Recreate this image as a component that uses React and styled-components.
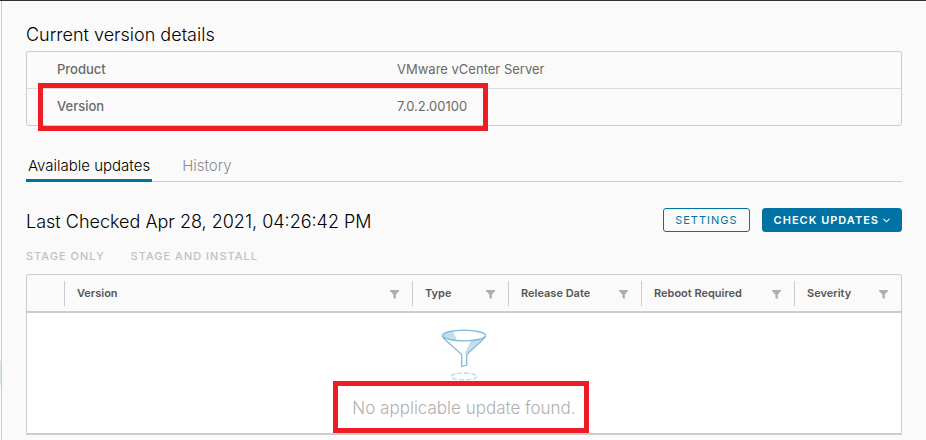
import React from 'react';
import styled, { createGlobalStyle } from 'styled-components';

const GlobalStyle = createGlobalStyle`
  * {
    box-sizing: border-box;
  }

  body {
    margin: 0;
    background-color: #fafafa;
    color: #000;
    font-family: Inter, 'Open Sans', sans-serif;
    font-size: 13px;
  }

  button {
    font-family: inherit;
    cursor: pointer;
  }
`;

const Page = styled.div`
  display: flex;
  min-height: 100vh;
  border-top: 1px solid #313131;
`;

const SideEdge = styled.div`
  width: 2px;
  padding-top: 360px;
  border-right: 1px solid #ccc;

  .selected {
    height: 24px;
    background-color: #d9e4ea;
  }
`;

const Content = styled.main`
  flex: 1;
  padding: 24px 24px 4px;
`;

const Title = styled.h2`
  margin: 0;
  font-size: 18px;
  font-weight: 300;
  line-height: 20px;
`;

const DetailsTable = styled.table`
  width: 100%;
  margin-top: 6px;
  border: 1px solid #ccc;
  border-radius: 3px;
  border-spacing: 0;
  color: #6a6a6a;

  tr {
    position: relative;
  }

  th,
  td {
    height: 36px;
    padding: 0 30px 2px;
    font-weight: 400;
    line-height: 16px;
    text-align: left;
  }

  th {
    width: 340px;
    font-weight: 500;
  }

  tr + tr th,
  tr + tr td {
    height: 37px;
    border-top: 1px solid #ddd;
  }
`;

const Highlight = styled.span`
  position: absolute;
  top: ${(props) => props.$top}px;
  left: ${(props) => props.$left}px;
  width: ${(props) => props.$width}px;
  height: ${(props) => props.$height}px;
  border: 5px solid #ee1c25;
  pointer-events: none;
`;

const Tabs = styled.div`
  display: flex;
  gap: 28px;
  height: 36px;
  margin-top: 20px;
  box-shadow: inset 0 -1px 0 #ccc;
`;

const Tab = styled.button`
  padding: 6px 2px 0;
  border: none;
  border-bottom: 3px solid ${(props) => (props.$active ? '#0072a3' : 'transparent')};
  background: none;
  color: ${(props) => (props.$active ? '#000' : '#8c8c8c')};
  font-size: 15px;
  font-weight: 300;
`;

const Toolbar = styled.div`
  display: flex;
  align-items: flex-end;
  justify-content: space-between;
  margin-top: 26px;

  .buttons {
    display: flex;
    gap: 12px;
  }
`;

const Button = styled.button`
  display: flex;
  align-items: center;
  gap: 4px;
  height: 24px;
  padding: 0 11px;
  border: 1px solid #0072a3;
  border-radius: 3px;
  background-color: ${(props) => (props.$primary ? '#0072a3' : 'transparent')};
  color: ${(props) => (props.$primary ? '#fff' : '#0072a3')};
  font-size: 11px;
  font-weight: ${(props) => (props.$primary ? 600 : 400)};
  letter-spacing: 1px;
`;

const Actions = styled.div`
  display: flex;
  gap: 26px;
  margin-top: 16px;

  button {
    padding: 0;
    border: none;
    background: none;
    color: #c1c1c1;
    font-size: 11px;
    font-weight: 500;
    line-height: 16px;
    letter-spacing: 1px;
  }
`;

const Grid = styled.table`
  width: 100%;
  margin-top: 10px;
  border: 1px solid #ccc;
  border-bottom-width: 2px;
  border-radius: 3px 3px 0 0;
  border-spacing: 0;
  table-layout: fixed;
  color: #565656;

  th,
  td {
    padding: 0;
  }

  th {
    height: 38px;
    border-bottom: 2px solid #ccc;
  }

  td {
    height: 120px;
    background-color: #fff;
  }
`;

const Column = styled.th`
  width: ${(props) => (props.$width ? `${props.$width}px` : 'auto')};

  div {
    display: flex;
    align-items: center;
    justify-content: space-between;
    height: 25px;
    padding: 0 13px 0 12px;
    border-left: 1px solid #ccc;
    font-size: 11px;
    font-weight: 600;
  }

  svg {
    margin-top: 3px;
  }
`;

const Empty = styled.div`
  display: flex;
  flex-direction: column;
  align-items: center;
  gap: 16px;

  p {
    position: relative;
    margin: 0;
    color: #b0b0b0;
    font-size: 17px;
    font-weight: 300;
    line-height: 20px;
  }
`;

const FilterIcon = () => (
  <svg width="9" height="9" viewBox="0 0 9 9" fill="#aeaeae">
    <path d="M0 0h9v1L5.8 4.4V9L3.4 7.8V4.4L0 1z" />
  </svg>
);

const ChevronIcon = () => (
  <svg width="7" height="5" viewBox="0 0 7 5" fill="none" stroke="currentColor" strokeWidth="1.1">
    <path d="M.5 .8l3 3 3-3" />
  </svg>
);

const FunnelIcon = () => (
  <svg width="46" height="54" viewBox="0 -1 46 54" fill="none" stroke="#7fbbdc" strokeWidth="1.3">
    <path d="M1.500 6.500C1.500 4 7 2 12 1.600L16 11.500C8 10.500 2 9 1.500 6.500z" fill="#c3dfee" stroke="none" />
    <path d="M30 11.500C36 11 41 10 43 8.500L26 25L24 24z" fill="#c3dfee" stroke="none" />
    <ellipse cx="23" cy="6.500" rx="21.500" ry="5.300" />
    <path d="M1.500 7c.3 1.800 1.500 2.700 3 4l16.200 14.500v12l5-1.500V25.500L41.500 11c1.600-1.300 2.700-2.200 3-4" />
    <ellipse cx="23" cy="47.500" rx="13" ry="3.500" stroke="#b9d9ea" strokeDasharray="5 2" />
  </svg>
);

const columns = [
  { name: 'Version' },
  { name: 'Type', width: 96 },
  { name: 'Release Date', width: 133 },
  { name: 'Reboot Required', width: 153 },
  { name: 'Severity', width: 107 },
];

const VersionDetails = () => {
  return (
    <section>
      <Title>Current version details</Title>
      <DetailsTable>
        <tbody>
          <tr>
            <th scope="row">Product</th>
            <td>VMware vCenter Server</td>
          </tr>
          <tr>
            <th scope="row">
              Version
              <Highlight $top={-5} $left={11} $width={450} $height={48} />
            </th>
            <td>7.0.2.00100</td>
          </tr>
        </tbody>
      </DetailsTable>
    </section>
  );
};

const UpdatesGrid = () => {
  return (
    <Grid>
      <thead>
        <tr>
          <Column $width={37} />
          {columns.map((column) => (
            <Column key={column.name} $width={column.width} scope="col">
              <div>
                {column.name}
                <FilterIcon />
              </div>
            </Column>
          ))}
        </tr>
      </thead>
      <tbody>
        <tr>
          <td colSpan={6}>
            <Empty>
              <FunnelIcon />
              <p>
                No applicable update found.
                <Highlight $top={-17} $left={-19} $width={256} $height={52} />
              </p>
            </Empty>
          </td>
        </tr>
      </tbody>
    </Grid>
  );
};

const App = () => {
  return (
    <>
      <GlobalStyle />
      <Page>
        <SideEdge>
          <div className="selected" />
        </SideEdge>
        <Content>
          <VersionDetails />

          <Tabs role="tablist">
            <Tab role="tab" aria-selected="true" $active>
              Available updates
            </Tab>
            <Tab role="tab" aria-selected="false">
              History
            </Tab>
          </Tabs>

          <Toolbar>
            <Title>Last Checked Apr 28, 2021, 04:26:42 PM</Title>
            <div className="buttons">
              <Button>SETTINGS</Button>
              <Button $primary>
                CHECK UPDATES
                <ChevronIcon />
              </Button>
            </div>
          </Toolbar>

          <Actions>
            <button disabled>STAGE ONLY</button>
            <button disabled>STAGE AND INSTALL</button>
          </Actions>

          <UpdatesGrid />
        </Content>
      </Page>
    </>
  );
};

export default App;
